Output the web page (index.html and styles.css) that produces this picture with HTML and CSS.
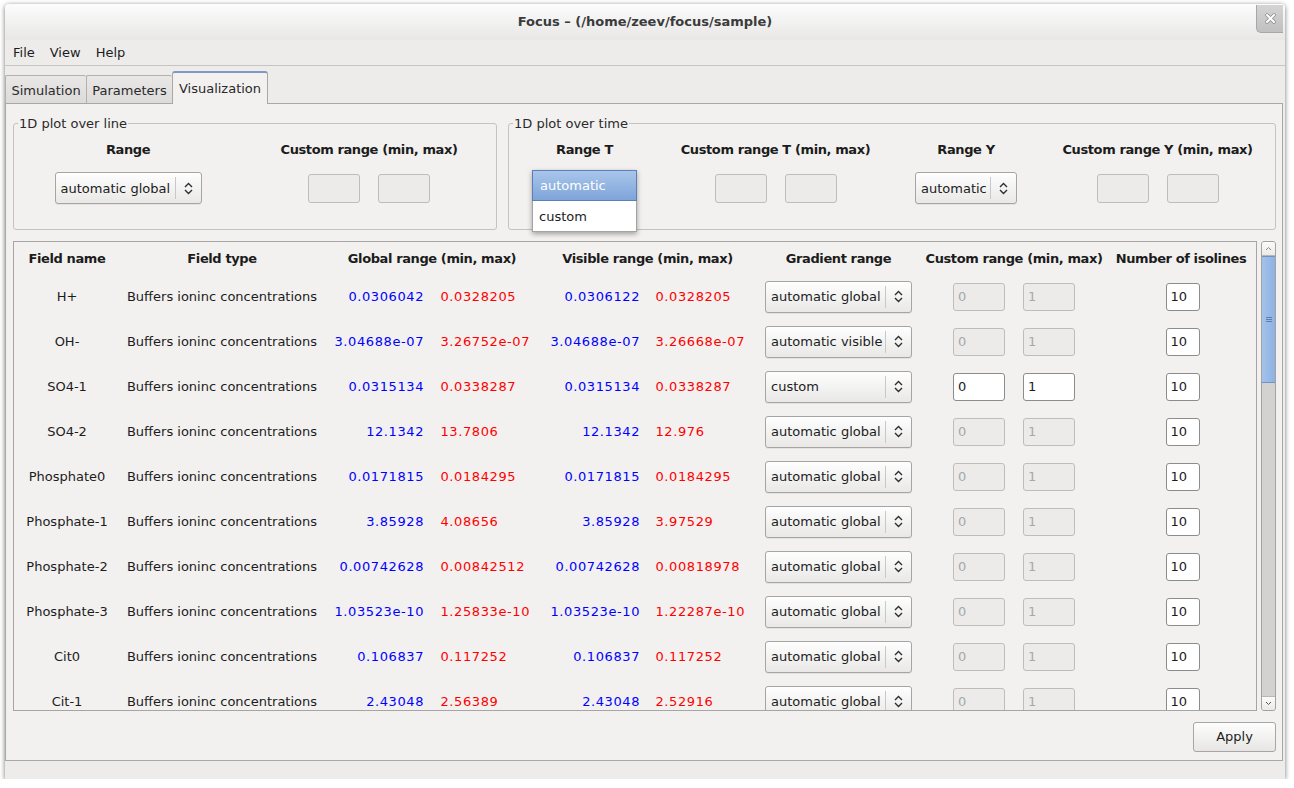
FILE: index.html
```html
<!DOCTYPE html>
<html>
<head>
<meta charset="utf-8">
<title>Focus</title>
<link rel="stylesheet" href="styles.css">
</head>
<body>
<div class="window">
  <div class="titlebar">
    <div class="title">Focus – (/home/zeev/focus/sample)</div>
    <div class="close">
      <svg width="11" height="11" viewBox="0 0 11 11"><path d="M2 2 L9 9 M9 2 L2 9" stroke="#8a8a8a" stroke-width="3.4" stroke-linecap="round"/><path d="M2 2 L9 9 M9 2 L2 9" stroke="#ffffff" stroke-width="2" stroke-linecap="round"/></svg>
    </div>
  </div>
  <div class="menubar"><span>File</span><span>View</span><span>Help</span></div>
  <div class="tabbar">
    <div class="tab t-sim">Simulation</div>
    <div class="tab t-par">Parameters</div>
    <div class="tab tab-active t-vis">Visualization</div>
  </div>
  <div class="pane">
    <div class="groups">
      <fieldset class="group g-line">
        <legend>1D plot over line</legend>
        <div class="ghead">Range</div>
        <div class="ghead">Custom range (min, max)</div>
        <div class="gctl"><div class="combo w147"><span class="ctext">automatic global</span><span class="carrow"><svg width="9" height="15" viewBox="0 0 9 15"><path d="M1 6 L4.5 2.5 L8 6 M1 9 L4.5 12.5 L8 9" fill="none" stroke="#2e2e2e" stroke-width="1.4"/></svg></span></div></div>
        <div class="gctl pair"><span class="field dis big"></span><span class="field dis big"></span></div>
      </fieldset>
      <fieldset class="group g-time">
        <legend>1D plot over time</legend>
        <div class="ghead">Range T</div>
        <div class="ghead">Custom range T (min, max)</div>
        <div class="ghead">Range Y</div>
        <div class="ghead">Custom range Y (min, max)</div>
        <div class="gctl">
          <div class="popup-anchor">
            <div class="combo w105"><span class="ctext">automatic</span></div>
            <div class="popup">
              <div class="pitem sel">automatic</div>
              <div class="pitem">custom</div>
            </div>
          </div>
        </div>
        <div class="gctl pair"><span class="field dis big"></span><span class="field dis big"></span></div>
        <div class="gctl"><div class="combo w102"><span class="ctext">automatic</span><span class="carrow"><svg width="9" height="15" viewBox="0 0 9 15"><path d="M1 6 L4.5 2.5 L8 6 M1 9 L4.5 12.5 L8 9" fill="none" stroke="#2e2e2e" stroke-width="1.4"/></svg></span></div></div>
        <div class="gctl pair"><span class="field dis big"></span><span class="field dis big"></span></div>
      </fieldset>
    </div>

    <div class="tablearea">
      <div class="table">
        <div class="trow thead">
          <div>Field name</div>
          <div>Field type</div>
          <div>Global range (min, max)</div>
          <div>Visible range (min, max)</div>
          <div>Gradient range</div>
          <div>Custom range (min, max)</div>
          <div>Number of isolines</div>
        </div>
        <div id="rows"></div>
      </div>
      <div class="scrollbar">
        <div class="sbtn up"><svg width="7" height="5" viewBox="0 0 7 5"><path d="M1 4 L3.5 1.5 L6 4" fill="none" stroke="#8a8a8a" stroke-width="1"/></svg></div>
        <div class="thumb"><svg width="6" height="7" viewBox="0 0 6 7"><path d="M0 1.5 H6 M0 3.5 H6 M0 5.5 H6" stroke="#5d7fb0" stroke-width="1"/></svg></div>
        <div class="trough"></div>
        <div class="sbtn down"><svg width="7" height="5" viewBox="0 0 7 5"><path d="M1 1 L3.5 3.5 L6 1" fill="none" stroke="#555" stroke-width="1"/></svg></div>
      </div>
    </div>

    <div class="actions"><div class="button">Apply</div></div>
  </div>
</div>
<script src="app.js"></script>
</body>
</html>
```
FILE: app.js
```js
var data = [
  ["H+", "0.0306042", "0.0328205", "0.0306122", "0.0328205", "automatic global", false],
  ["OH-", "3.04688e-07", "3.26752e-07", "3.04688e-07", "3.26668e-07", "automatic visible", false],
  ["SO4-1", "0.0315134", "0.0338287", "0.0315134", "0.0338287", "custom", true],
  ["SO4-2", "12.1342", "13.7806", "12.1342", "12.976", "automatic global", false],
  ["Phosphate0", "0.0171815", "0.0184295", "0.0171815", "0.0184295", "automatic global", false],
  ["Phosphate-1", "3.85928", "4.08656", "3.85928", "3.97529", "automatic global", false],
  ["Phosphate-2", "0.00742628", "0.00842512", "0.00742628", "0.00818978", "automatic global", false],
  ["Phosphate-3", "1.03523e-10", "1.25833e-10", "1.03523e-10", "1.22287e-10", "automatic global", false],
  ["Cit0", "0.106837", "0.117252", "0.106837", "0.117252", "automatic global", false],
  ["Cit-1", "2.43048", "2.56389", "2.43048", "2.52916", "automatic global", false]
];
var arrow = '<span class="carrow"><svg width="9" height="15" viewBox="0 0 9 15"><path d="M1 6 L4.5 2.5 L8 6 M1 9 L4.5 12.5 L8 9" fill="none" stroke="#2e2e2e" stroke-width="1.4"/></svg></span>';
var html = "";
data.forEach(function (r) {
  var cls = r[6] ? "field" : "field dis";
  html += '<div class="trow">' +
    '<div class="c-name">' + r[0] + '</div>' +
    '<div class="c-type">Buffers ioninc concentrations</div>' +
    '<div class="c-range g"><span class="min">' + r[1] + '</span><span class="max">' + r[2] + '</span></div>' +
    '<div class="c-range v"><span class="min">' + r[3] + '</span><span class="max">' + r[4] + '</span></div>' +
    '<div class="c-grad"><div class="combo w147"><span class="ctext">' + r[5] + '</span>' + arrow + '</div></div>' +
    '<div class="c-custom"><span class="' + cls + '">0</span><span class="' + cls + '">1</span></div>' +
    '<div class="c-iso"><span class="field iso">10</span></div>' +
    '</div>';
});
document.getElementById("rows").innerHTML = html;
```
FILE: styles.css
```css
* { box-sizing: border-box; }

body {
  margin: 0;
  background: #ffffff;
  font-family: "DejaVu Sans", "Liberation Sans", sans-serif;
  font-size: 13px;
  color: #1c1c1c;
}

.window {
  margin: 4px 0 0 5px;
  width: 1280px;
  height: 775px;
  display: flex;
  flex-direction: column;
  background: #edeceb;
  border-radius: 4px 4px 0 0;
  box-shadow: 0 1px 5px rgba(0, 0, 0, 0.55);
}

/* title bar */
.titlebar {
  height: 36px;
  flex: none;
  display: grid;
  grid-template-columns: 1fr auto 1fr;
  align-items: start;
  background: linear-gradient(#fcfcfc, #e8e7e6);
  border-radius: 4px 4px 0 0;
}
.title {
  grid-column: 2;
  font-weight: bold;
  font-size: 13px;
  line-height: 35px;
  color: #3b3b3b;
}
.close {
  grid-column: 3;
  justify-self: end;
  width: 27px;
  height: 28px;
  margin: 1px 2px 0 0;
  border: 1px solid #a7a7a7;
  border-top: none;
  border-right: none;
  border-radius: 0 0 0 5px;
  background: linear-gradient(#d4d4d4, #c0c0c0);
  display: flex;
  align-items: center;
  justify-content: center;
}

/* menu */
.menubar {
  height: 26px;
  flex: none;
  display: flex;
  align-items: center;
  gap: 15px;
  padding: 0 0 1px 8px;
  border-bottom: 1px solid #c6c5c3;
}

/* tabs */
.tabbar {
  height: 37px;
  flex: none;
  display: flex;
  align-items: flex-end;
  position: relative;
  z-index: 2;
}
.tab {
  height: 28px;
  padding-top: 7px;
  text-align: center;
  border: 1px solid #b1b0ae;
  border-bottom: none;
  border-right: none;
  border-radius: 2px 2px 0 0;
  background: linear-gradient(#e9e8e7, #dcdbd9);
  color: #2a2a2a;
}
.t-sim { width: 81px; }
.t-par { width: 86px; }
.t-vis { width: 96px; }
.tab-active {
  height: 33px;
  margin-bottom: -1px;
  padding-top: 8px;
  background: #f2f1f0;
  border: 1px solid #a9a8a6;
  border-top: 2px solid #7d9ac6;
  border-bottom: none;
  border-radius: 3px 3px 0 0;
}

/* pane */
.pane {
  height: 658px;
  flex: none;
  margin-right: 2px;
  border: 1px solid #a9a8a6;
  background: #f2f1f0;
  padding: 12px 6px 8px 7px;
  display: flex;
  flex-direction: column;
}

.groups {
  display: flex;
  gap: 11px;
}

.group {
  margin: 0;
  min-width: 0;
  border: 1px solid #c4c3c1;
  border-radius: 3px;
  padding: 11px 0 25px 0;
  height: 114px;
  display: grid;
  grid-template-rows: 16px 32px;
  row-gap: 14px;
  justify-items: center;
  align-items: center;
}
.group legend {
  margin-left: 4px;
  padding: 0 1px;
  line-height: 15px;
  color: #2a2a2a;
}
.g-line {
  width: 484px;
  grid-template-columns: 228px 254px;
}
.g-time {
  width: 768px;
  grid-template-columns: 151px 231px 150px 233px;
}
.ghead {
  grid-row: 1;
  font-weight: bold;
  line-height: 16px;
  letter-spacing: -0.4px;
  white-space: nowrap;
  color: #1c1c1c;
}
.gctl {
  grid-row: 2;
  display: flex;
  align-items: center;
}
.pair { gap: 18px; }

/* combo */
.combo {
  height: 32px;
  display: flex;
  align-items: center;
  border: 1px solid #a6a5a3;
  border-radius: 3px;
  background: linear-gradient(#fefefe, #e9e8e7);
  box-shadow: 0 1px 0 rgba(0, 0, 0, 0.06);
  white-space: nowrap;
}
.ctext {
  flex: 1;
  padding-left: 5px;
}
.carrow {
  width: 26px;
  height: 22px;
  border-left: 1px solid #c9c8c6;
  display: flex;
  align-items: center;
  justify-content: center;
}
.w147 { width: 147px; }
.w105 { width: 105px; }
.w102 { width: 102px; }

.popup-anchor { position: relative; }
.popup {
  position: absolute;
  top: -2px;
  left: 0;
  width: 105px;
  background: #ffffff;
  border: 1px solid #a3a3a3;
  box-shadow: 0 2px 5px rgba(0, 0, 0, 0.35);
  z-index: 5;
}
.pitem {
  height: 30px;
  line-height: 31px;
  padding-left: 6px;
  color: #1c1c1c;
}
.pitem.sel {
  height: 31px;
  line-height: 30px;
  margin: -1px -1px 0 -1px;
  padding-left: 7px;
  color: #ffffff;
  border: 1px solid #5c80b6;
  background: linear-gradient(#a9c6eb, #7ea4d9);
}

/* fields */
.field {
  display: inline-block;
  width: 52px;
  height: 28px;
  line-height: 26px;
  padding-left: 4px;
  border: 1px solid #8c8c8b;
  border-radius: 3px;
  background: #ffffff;
  color: #1c1c1c;
}
.field.dis {
  border-color: #bebdbb;
  background: #ecebea;
  color: #a8a8a8;
}
.field.big { height: 29px; }
.field.iso { width: 34px; margin-left: 3px; }

/* table */
.tablearea {
  margin-top: 11px;
  height: 470px;
  display: flex;
  gap: 4px;
}
.table {
  flex: 1;
  border: 1px solid #a6a5a3;
  overflow: hidden;
}
.trow {
  display: grid;
  grid-template-columns: 106px 204px 216px 215px 167px 184px 1fr;
  align-items: center;
  height: 45px;
  white-space: nowrap;
}
.trow > div { display: flex; justify-content: center; }
.thead {
  height: 32px;
  font-weight: bold;
  letter-spacing: -0.4px;
}
.c-range {
  display: grid !important;
  grid-template-columns: 1fr 1fr;
  letter-spacing: 0.6px;
}
.c-range.g { column-gap: 17px; }
.c-range.v { column-gap: 16px; }
.c-range .min { text-align: right; color: #0000ff; margin-right: -0.6px; }
.c-range .max { text-align: left; color: #ff0000; }
.c-custom { gap: 18px; }

/* scrollbar */
.scrollbar {
  width: 15px;
  display: flex;
  flex-direction: column;
  border: 1px solid #a3a2a0;
  border-radius: 3px;
  background: #d3d2d0;
  overflow: hidden;
}
.sbtn {
  height: 14px;
  flex: none;
  display: flex;
  align-items: center;
  justify-content: center;
  background: linear-gradient(#fbfbfb, #ebeaea);
}
.sbtn.up { border-bottom: 1px solid #b8b7b5; }
.sbtn.down { border-top: 1px solid #b8b7b5; }
.thumb {
  height: 127px;
  flex: none;
  margin: 0 -1px;
  border: 1px solid #7093c4;
  background: linear-gradient(90deg, #a4c2ea, #8db2e2);
  display: flex;
  align-items: center;
  justify-content: center;
}
.trough { flex: 1; }

/* actions */
.actions {
  margin-top: 11px;
  display: flex;
  justify-content: flex-end;
}
.button {
  width: 83px;
  height: 30px;
  line-height: 28px;
  text-align: center;
  border: 1px solid #a7a6a4;
  border-radius: 3px;
  background: linear-gradient(#fdfdfd, #e7e6e5);
}
```
